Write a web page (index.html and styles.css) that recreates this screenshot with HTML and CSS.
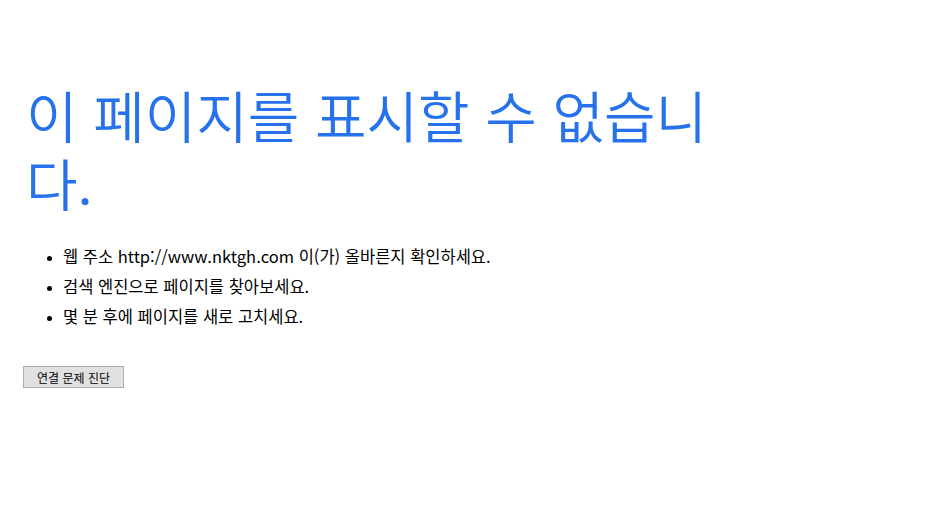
FILE: index.html
```html
<!DOCTYPE html>
<html lang="ko">
<head>
<meta charset="utf-8">
<title>이 페이지를 표시할 수 없습니다.</title>
<link rel="stylesheet" href="styles.css">
</head>
<body>
<div class="main">
  <h1 class="title">이 페이지를 표시할 수 없습니다.</h1>
  <ul class="tasks">
    <li>웹 주소 http://www.nktgh.com 이(가) 올바른지 확인하세요.</li>
    <li>검색 엔진으로 페이지를 찾아보세요.</li>
    <li>몇 분 후에 페이지를 새로 고치세요.</li>
  </ul>
  <button class="diag" type="button">연결 문제 진단</button>
</div>
</body>
</html>
```
FILE: styles.css
```css
html, body {
  margin: 0;
  padding: 0;
  background: #fff;
}
.main {
  padding: 80px 0 0 23px;
  width: 720px;
  font-family: "Noto Sans CJK KR", "Noto Sans", sans-serif;
}
.title {
  margin: 0 0 0 3px;
  color: #2672ec;
  font-size: 56px;
  font-weight: 350;
  line-height: 68px;
}
.tasks {
  margin: 25px 0 0 0;
  padding-left: 40px;
  font-size: 16.5px;
  line-height: 30px;
  color: #000;
}
.tasks li::marker {
  font-size: 12px;
}
.diag {
  display: block;
  margin-top: 35px;
  font-family: "Noto Sans CJK KR", sans-serif;
  font-size: 12px;
  height: 22px;
  width: 101px;
  padding: 0;
  background: #e1e1e1;
  border: 1px solid #adadad;
  color: #000;
}
```
